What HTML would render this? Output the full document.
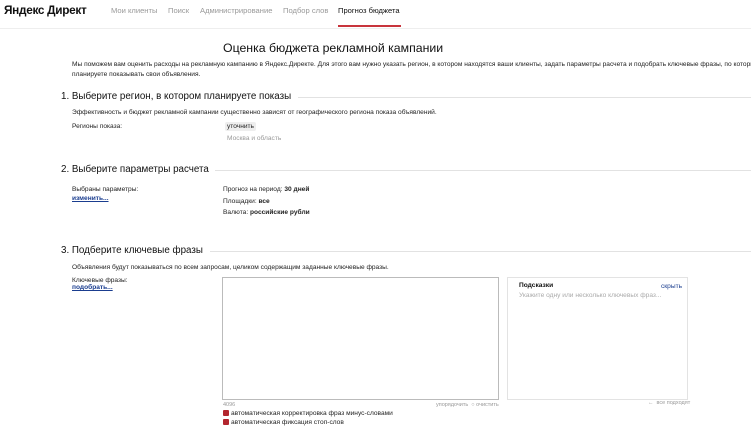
<!DOCTYPE html>
<html><head><meta charset="utf-8"><style>
body{margin:0;width:751px;height:433px;overflow:hidden;background:#fff;font-family:"Liberation Sans",sans-serif;color:#222;position:relative}
.a{position:absolute;white-space:nowrap}
.s{font-size:6.6px}
.nav{font-size:7.6px;color:#999;top:6px}
h2{position:absolute;margin:0;font-weight:normal;font-size:9.8px;left:61px;color:#111}
.ln{position:absolute;height:1px;background:#e2e2e2;right:0}
u{color:#1a3d8f}
.cb{display:inline-block;width:6px;height:6px;background:#b3262e;vertical-align:-1px;margin-right:2px;border-radius:1px}
</style></head><body>
<div class="a" style="left:4px;top:3px;font-size:11.8px;font-weight:bold;letter-spacing:-0.3px;color:#111">Яндекс Директ</div>
<div class="a nav" style="left:111px">Мои клиенты</div>
<div class="a nav" style="left:168px">Поиск</div>
<div class="a nav" style="left:200px">Администрирование</div>
<div class="a nav" style="left:283px">Подбор слов</div>
<div class="a nav" style="left:338px;color:#111">Прогноз бюджета</div>
<div class="a" style="left:338px;top:25px;width:63px;height:1.5px;background:#c8343c"></div>
<div class="a" style="left:0;top:28px;width:751px;height:1px;background:#eee"></div>
<div class="a" style="left:223px;top:41px;font-size:12.3px;color:#111">Оценка бюджета рекламной кампании</div>
<div class="a s" style="left:72px;top:60px;line-height:10px">Мы поможем вам оценить расходы на рекламную кампанию в Яндекс.Директе. Для этого вам нужно указать регион, в котором находятся ваши клиенты, задать параметры расчета и подобрать ключевые фразы, по которым вы<br>планируете показывать свои объявления.</div>
<h2 style="top:91px">1. Выберите регион, в котором планируете показы</h2><div class="ln" style="left:298px;top:97px"></div>
<div class="a s" style="left:72px;top:109px">Эффективность и бюджет рекламной кампании существенно зависят от географического региона показа объявлений.</div>
<div class="a s" style="left:72px;top:123px">Регионы показа:</div>
<div class="a s" style="left:225px;top:122px;background:#eee;padding:1px 2px;border-radius:2px">уточнить</div>
<div class="a s" style="left:227px;top:135px;color:#999">Москва и область</div>
<h2 style="top:164px">2. Выберите параметры расчета</h2><div class="ln" style="left:215px;top:170px"></div>
<div class="a s" style="left:72px;top:186px">Выбраны параметры:</div>
<div class="a s" style="left:72px;top:195px"><u><b>изменить...</b></u></div>
<div class="a s" style="left:223px;top:186px">Прогноз на период: <b>30 дней</b></div>
<div class="a s" style="left:223px;top:198px">Площадки: <b>все</b></div>
<div class="a s" style="left:223px;top:209px">Валюта: <b>российские рубли</b></div>
<h2 style="top:245px">3. Подберите ключевые фразы</h2><div class="ln" style="left:210px;top:251px"></div>
<div class="a s" style="left:72px;top:264px">Объявления будут показываться по всем запросам, целиком содержащим заданные ключевые фразы.</div>
<div class="a s" style="left:72px;top:277px">Ключевые фразы:</div>
<div class="a s" style="left:72px;top:284px"><u><b>подобрать...</b></u></div>
<div class="a" style="left:222px;top:277px;width:275px;height:121px;border:1px solid #bbb"></div>
<div class="a" style="left:507px;top:277px;width:179px;height:121px;border:1px solid #e3e3e3"></div>
<div class="a s" style="left:519px;top:282px;font-weight:bold;color:#111">Подсказки</div>
<div class="a s" style="left:661px;top:283px;color:#1a3d8f">скрыть</div>
<div class="a s" style="left:519px;top:292px;color:#aaa">Укажите одну или несколько ключевых фраз...</div>
<div class="a" style="left:223px;top:402px;font-size:5.5px;color:#999">4096</div>
<div class="a" style="left:436px;top:402px;font-size:5.5px;color:#999">упорядочить &nbsp;○ очистить</div>
<div class="a" style="left:648px;top:400px;font-size:5.5px;color:#999">← &nbsp;все подходят</div>
<div class="a s" style="left:223px;top:410px"><span class="cb"></span>автоматическая корректировка фраз минус-словами</div>
<div class="a s" style="left:223px;top:419px"><span class="cb"></span>автоматическая фиксация стоп-слов</div>
</body></html>
